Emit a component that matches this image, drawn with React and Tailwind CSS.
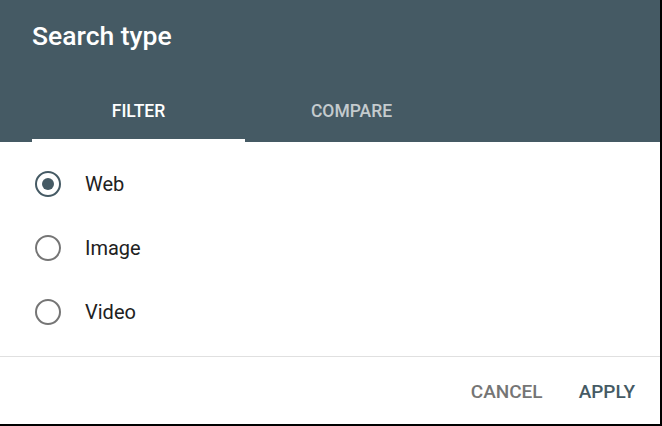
import { useState } from "react";

const options = ["Web", "Image", "Video"];

function Radio({ checked }) {
  return (
    <span
      className={`flex h-[26px] w-[26px] shrink-0 items-center justify-center rounded-full border-[2.5px] ${
        checked ? "border-[#455a64]" : "border-[#757575]"
      }`}
    >
      {checked && <span className="h-[12px] w-[12px] rounded-full bg-[#455a64]"></span>}
    </span>
  );
}

export default function App() {
  const [tab, setTab] = useState("filter");
  const [type, setType] = useState("Web");

  return (
    <div className="h-[426px] w-[662px] bg-black font-['Roboto',sans-serif]">
      <div className="flex h-[424px] w-[660px] flex-col bg-white">
        {/* Header */}
        <div className="h-[142px] bg-[#455a64] px-[32px]">
          <h1 className="pt-[20px] text-[26.5px] font-medium leading-[32px] text-white">Search type</h1>
          <div className="mt-[40px] flex">
            {[
              ["filter", "FILTER"],
              ["compare", "COMPARE"],
            ].map(([key, label]) => (
              <button
                key={key}
                onClick={() => setTab(key)}
                className={`flex h-[50px] w-[213px] flex-col items-center justify-between text-[17.5px] font-medium ${
                  tab === key ? "text-white" : "text-white/70"
                }`}
              >
                <span className="pt-[9px] leading-[20px]">{label}</span>
                <span className={`h-[3px] w-full ${tab === key ? "bg-white" : "bg-transparent"}`}></span>
              </button>
            ))}
          </div>
        </div>

        {/* Options */}
        <div className="flex flex-col pt-[10px] pb-[12px]">
          {options.map((o) => (
            <label
              key={o}
              onClick={() => setType(o)}
              className="flex h-[64px] cursor-pointer items-center gap-[24px] px-[35px]"
            >
              <Radio checked={type === o} />
              <span className="text-[20px] text-[#212121]">{o}</span>
            </label>
          ))}
        </div>

        {/* Footer */}
        <div className="flex flex-1 items-center justify-end gap-[36px] border-t border-[#e0e0e0] pt-[4px] pr-[25px]">
          <button className="text-[19px] font-medium text-[#757575]">CANCEL</button>
          <button className="text-[19px] font-medium text-[#455a64]">APPLY</button>
        </div>
      </div>
    </div>
  );
}
